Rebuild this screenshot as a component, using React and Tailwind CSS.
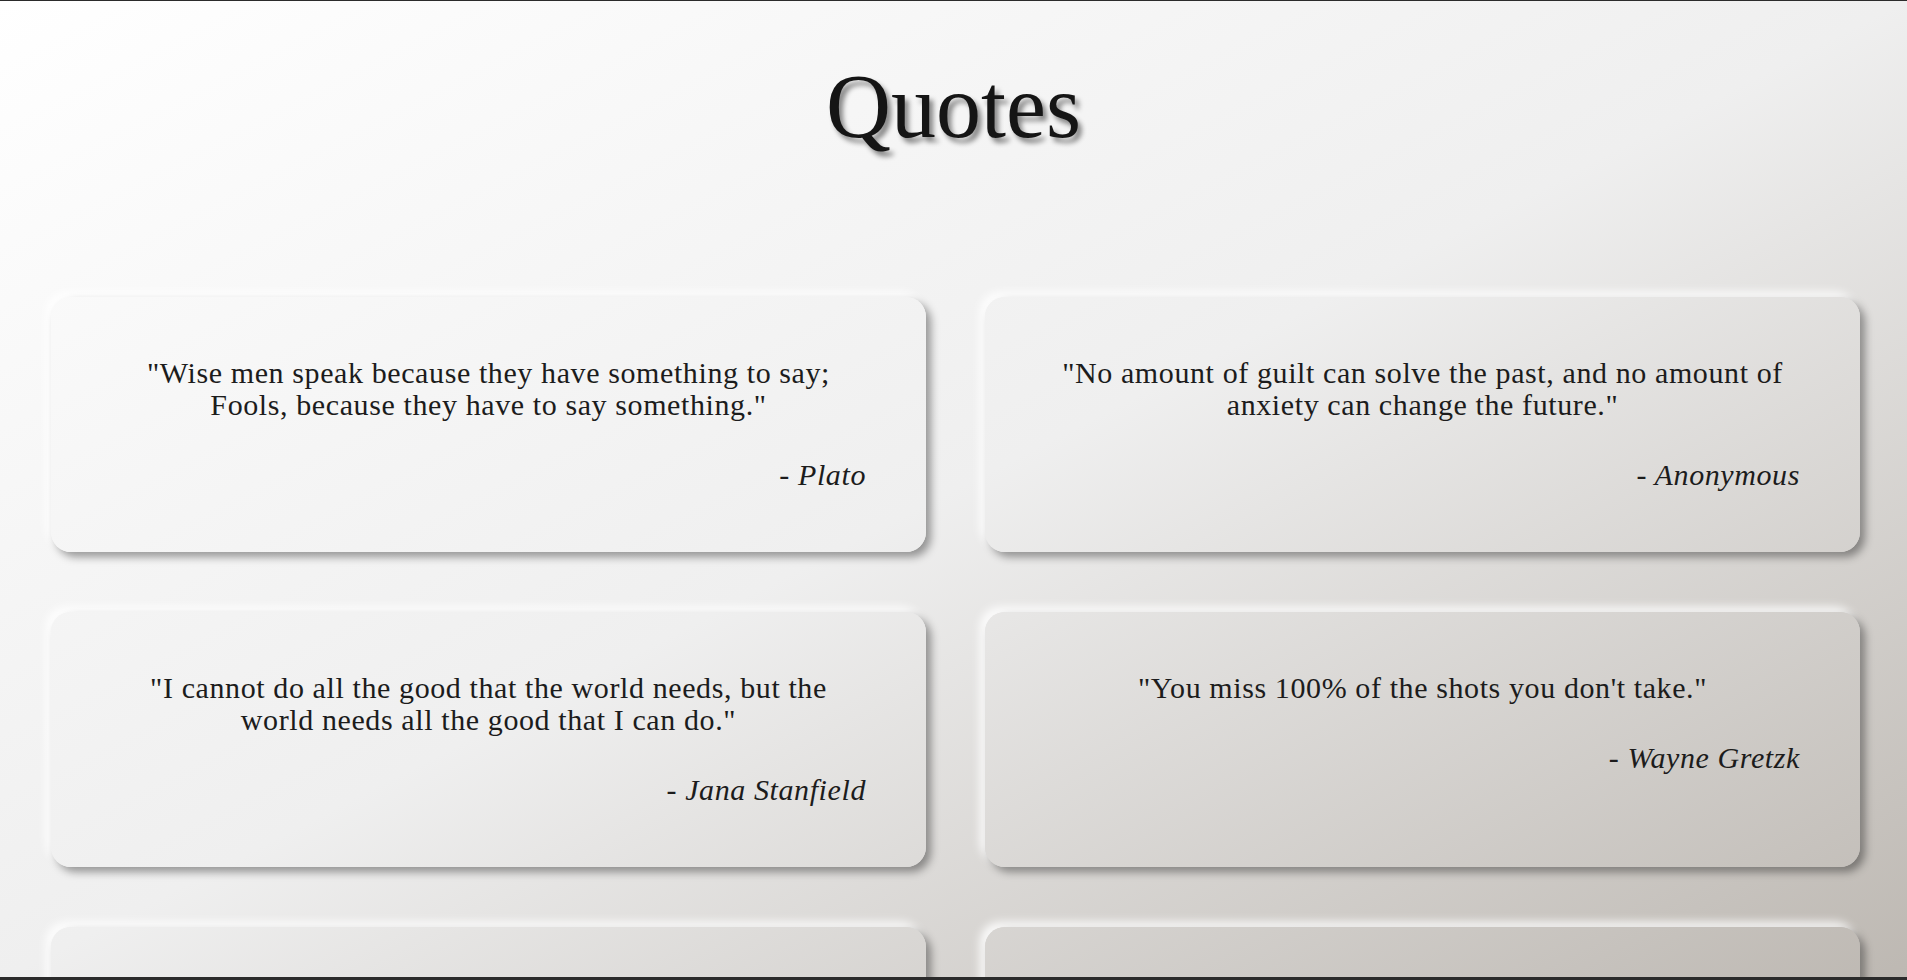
const quotes = [
  {
    text: '"Wise men speak because they have something to say; Fools, because they have to say something."',
    author: "Plato",
  },
  {
    text: '"No amount of guilt can solve the past, and no amount of anxiety can change the future."',
    author: "Anonymous",
  },
  {
    text: '"I cannot do all the good that the world needs, but the world needs all the good that I can do."',
    author: "Jana Stanfield",
  },
  {
    text: '"You miss 100% of the shots you don\'t take."',
    author: "Wayne Gretzk",
  },
];

const cardClass =
  "rounded-[20px] bg-fixed bg-linear-to-br from-white via-[#efefef] to-[#bdb8b2] shadow-[5px_5px_8px_rgba(0,0,0,0.38),-5px_-5px_10px_rgba(255,255,255,0.9)]";

const QuoteCard = ({ text, author }) => (
  <div className={`${cardClass} px-[60px] pt-[60px] pb-[61px]`}>
    <p className="mx-auto max-w-[745px] text-center text-[30px] leading-[32px] tracking-[0.6px] text-[#1c1c1c]">
      {text}
    </p>
    <p className="mt-[38px] text-right text-[30px] italic leading-[32px] tracking-[0.6px] text-[#1c1c1c]">
      - {author}
    </p>
  </div>
);

export default function App() {
  return (
    <div className="h-[980px] overflow-hidden border-t border-b-[3px] border-[#2b2b2b] bg-fixed bg-linear-to-br from-white via-[#efefef] to-[#bdb8b2] font-['Georgia','Liberation_Serif',serif]">
      {/* Header */}
      <h1 className="pt-[61px] pb-[145px] text-center text-[90px] leading-[90px] text-[#151515] [text-shadow:4px_5px_5px_rgba(0,0,0,0.45)]">
        Quotes
      </h1>

      {/* Quote grid */}
      <div className="grid grid-cols-2 gap-x-[59px] gap-y-[60px] pl-[51px] pr-[47px]">
        {quotes.map((q) => (
          <QuoteCard key={q.author} text={q.text} author={q.author} />
        ))}
        {/* next row, below the fold */}
        <div className={`${cardClass} h-[255px]`} />
        <div className={`${cardClass} h-[255px]`} />
      </div>
    </div>
  );
}
